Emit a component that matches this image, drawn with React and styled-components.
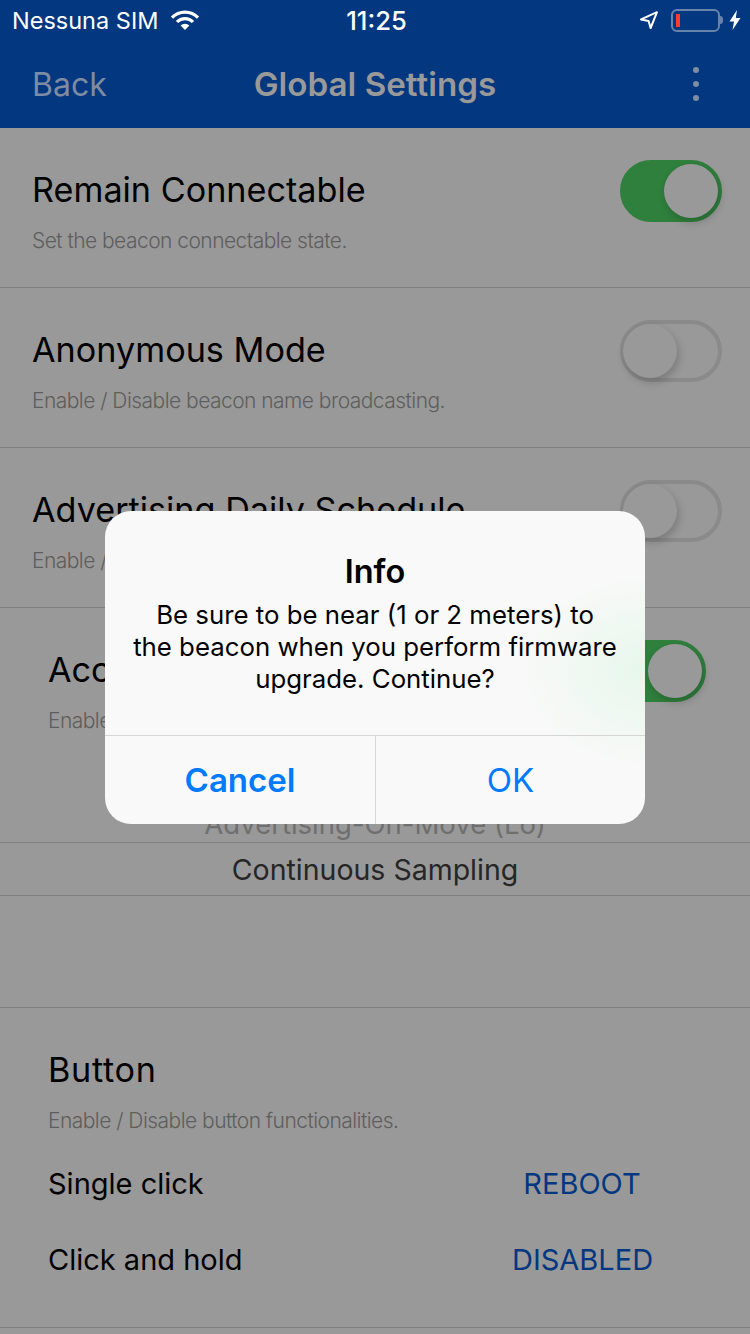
import React from "react";
import styled, { createGlobalStyle } from "styled-components";

const GlobalStyle = createGlobalStyle`
  html, body {
    margin: 0;
    padding: 0;
    background: #999999;
  }
  body {
    font-family: Inter, "Liberation Sans", sans-serif;
  }
`;

function Toggle({ on }) {
  return (
    <ToggleTrack $on={on}>
      <ToggleKnob $on={on} />
    </ToggleTrack>
  );
}

export default function App() {
  return (
    <Page>
      <GlobalStyle />
      <Header>
        <StatusBar>
          <StatusLeft>
            <Carrier>Nessuna SIM</Carrier>
            <svg width="30" height="22" viewBox="0 0 30 22">
              <g fill="none" stroke="#fff" strokeWidth="3.2">
                <path d="M2 8.6 A18 18 0 0 1 28 8.6" />
                <path d="M7 13 A11 11 0 0 1 23 13" />
              </g>
              <path d="M15 21 L10.6 16.4 A6.4 6.4 0 0 1 19.4 16.4 Z" fill="#fff" />
            </svg>
          </StatusLeft>
          <Clock>11:25</Clock>
          <StatusRight>
            <svg width="20" height="20" viewBox="0 0 20 20">
              <path d="M2 9.4 L18 2.2 L11.6 18 L9.6 11 Z" fill="none" stroke="#fff" strokeWidth="2" strokeLinejoin="round" />
            </svg>
            <Battery>
              <BatteryLevel />
            </Battery>
            <BatteryNub />
            <svg width="12" height="20" viewBox="0 0 12 20">
              <path d="M8 0 L0.5 11.5 H5 L3.5 20 L11.5 8 H6.8 Z" fill="#fff" />
            </svg>
          </StatusRight>
        </StatusBar>
        <NavBar>
          <BackLink>Back</BackLink>
          <NavTitle>Global Settings</NavTitle>
          <svg width="8" height="38" viewBox="0 0 8 38">
            <g fill="#7d8ba3">
              <circle cx="4" cy="5" r="3" />
              <circle cx="4" cy="19" r="3" />
              <circle cx="4" cy="33" r="3" />
            </g>
          </svg>
        </NavBar>
      </Header>

      <SettingRow>
        <SettingText>
          <SettingTitle>Remain Connectable</SettingTitle>
          <SettingHint>Set the beacon connectable state.</SettingHint>
        </SettingText>
        <Toggle on />
      </SettingRow>
      <SettingRow>
        <SettingText>
          <SettingTitle>Anonymous Mode</SettingTitle>
          <SettingHint>Enable / Disable beacon name broadcasting.</SettingHint>
        </SettingText>
        <Toggle />
      </SettingRow>
      <SettingRow>
        <SettingText>
          <SettingTitle>Advertising Daily Schedule</SettingTitle>
          <SettingHint>Enable / Disable daily schedule.</SettingHint>
        </SettingText>
        <Toggle />
      </SettingRow>

      <PickerSection>
        <SettingRow $inset $bare>
          <SettingText>
            <SettingTitle>Accelerometer</SettingTitle>
            <SettingHint>Enable / Disable accelerometer.</SettingHint>
          </SettingText>
          <Toggle on />
        </SettingRow>
        <Picker>
          <PickerOption>Advertising-On-Move (Lo)</PickerOption>
          <PickerSelected>Continuous Sampling</PickerSelected>
        </Picker>
      </PickerSection>

      <ButtonSection>
        <ButtonTitle>Button</ButtonTitle>
        <SettingHint>Enable / Disable button functionalities.</SettingHint>
        <ActionList>
          <ActionRow>
            <ActionLabel>Single click</ActionLabel>
            <ActionValue>REBOOT</ActionValue>
          </ActionRow>
          <ActionRow>
            <ActionLabel>Click and hold</ActionLabel>
            <ActionValue>DISABLED</ActionValue>
          </ActionRow>
        </ActionList>
      </ButtonSection>

      <Overlay>
        <Dialog>
          <DialogBody>
            <DialogTitle>Info</DialogTitle>
            <DialogMessage>
              Be sure to be near (1 or 2 meters) to
              <br />
              the beacon when you perform firmware upgrade. Continue?
            </DialogMessage>
          </DialogBody>
          <DialogActions>
            <DialogButton $bold>Cancel</DialogButton>
            <DialogButton>OK</DialogButton>
          </DialogActions>
        </Dialog>
      </Overlay>
    </Page>
  );
}

const Page = styled.div`
  position: relative;
  width: 750px;
  height: 1334px;
  overflow: hidden;
  background: #999999;
`;

const Header = styled.header`
  height: 128px;
  background: #03377f;
`;

const StatusBar = styled.div`
  height: 40px;
  display: grid;
  grid-template-columns: 1fr auto 1fr;
  align-items: center;
  padding: 0 9px 0 12px;
  color: #fff;
`;

const StatusLeft = styled.div`
  display: flex;
  align-items: center;
  gap: 12px;
`;

const Carrier = styled.span`
  font-size: 23.5px;
`;

const Clock = styled.span`
  font-size: 25.6px;
  font-weight: 500;
`;

const StatusRight = styled.div`
  display: flex;
  align-items: center;
  justify-content: flex-end;
`;

const Battery = styled.div`
  box-sizing: border-box;
  width: 49px;
  height: 23px;
  margin-left: 12px;
  padding: 3px;
  border: 2px solid #6884ab;
  border-radius: 6px;
`;

const BatteryLevel = styled.div`
  width: 4px;
  height: 100%;
  background: #ff3b30;
`;

const BatteryNub = styled.div`
  width: 3px;
  height: 8px;
  margin-right: 6px;
  background: #6884ab;
  border-radius: 0 3px 3px 0;
`;

const NavBar = styled.div`
  height: 88px;
  display: grid;
  grid-template-columns: 1fr auto 1fr;
  align-items: center;
  padding: 0 32px;

  svg {
    justify-self: end;
    margin-right: 18px;
  }
`;

const BackLink = styled.span`
  font-size: 32px;
  color: #7d8ba3;
`;

const NavTitle = styled.span`
  font-size: 33.2px;
  font-weight: 600;
  color: #999999;
`;

const SettingRow = styled.div`
  box-sizing: border-box;
  height: ${(p) => (p.$bare ? "auto" : "160px")};
  display: flex;
  justify-content: space-between;
  align-items: flex-start;
  padding: 32px ${(p) => (p.$inset ? "44px" : "28px")} 0 ${(p) => (p.$inset ? "48px" : "32px")};
  border-bottom: ${(p) => (p.$bare ? "none" : "1px solid #7f7f7f")};
`;

const SettingText = styled.div`
  padding-top: 10px;
`;

const SettingTitle = styled.div`
  font-size: 34.2px;
  line-height: 40px;
  color: #000;
`;

const ButtonTitle = styled(SettingTitle)`
  letter-spacing: 0.7px;
`;

const SettingHint = styled.div`
  margin-top: 16px;
  font-size: 21px;
  font-weight: 300;
  letter-spacing: -0.54px;
  line-height: 30px;
  color: #5e5e5e;
`;

const ToggleTrack = styled.div`
  box-sizing: border-box;
  position: relative;
  width: 102px;
  height: 62px;
  border-radius: 31px;
  background: ${(p) => (p.$on ? "#2f7f3d" : "#999999")};
  border: 4px solid ${(p) => (p.$on ? "#2f7f3d" : "#8a8a8a")};
`;

const ToggleKnob = styled.div`
  position: absolute;
  top: 0;
  left: ${(p) => (p.$on ? "40px" : "-1px")};
  width: 54px;
  height: 54px;
  border-radius: 50%;
  background: #999999;
  box-shadow: 2px 4px 8px rgba(0, 0, 0, 0.2);
`;

const PickerSection = styled.section`
  box-sizing: border-box;
  height: 400px;
  border-bottom: 1px solid #7f7f7f;
`;

const Picker = styled.div`
  margin-top: 53px;
  text-align: center;
`;

const PickerOption = styled.div`
  height: 53px;
  line-height: 70px;
  font-size: 27.5px;
  color: #6f6f6f;
`;

const PickerSelected = styled.div`
  box-sizing: border-box;
  height: 54px;
  line-height: 53px;
  font-size: 28.5px;
  color: #262626;
  border-top: 1px solid #7f7f7f;
  border-bottom: 1px solid #7f7f7f;
`;

const ButtonSection = styled.section`
  box-sizing: border-box;
  height: 320px;
  padding: 42px 48px 0;
  border-bottom: 1px solid #7f7f7f;
`;

const ActionList = styled.div`
  margin-top: 9px;
`;

const ActionRow = styled.div`
  display: flex;
  justify-content: space-between;
  align-items: center;
  height: 76px;
`;

const ActionLabel = styled.span`
  font-size: 29px;
  color: #000;
`;

const ActionValue = styled.span`
  width: 140px;
  margin-right: 50px;
  text-align: center;
  white-space: nowrap;
  font-size: 29px;
  color: #03377f;
`;

const Overlay = styled.div`
  position: absolute;
  inset: 0;
  display: flex;
  align-items: center;
  justify-content: center;
`;

const Dialog = styled.div`
  width: 540px;
  height: 313px;
  display: flex;
  flex-direction: column;
  border-radius: 26px;
  overflow: hidden;
  background:
    radial-gradient(ellipse 130px 100px at 100% 51%, rgba(230, 247, 234, 0.95), rgba(249, 249, 249, 0)),
    #f9f9f9;
`;

const DialogBody = styled.div`
  flex: 1;
  padding: 41px 24px 0;
  text-align: center;
`;

const DialogTitle = styled.div`
  font-size: 32.5px;
  font-weight: 600;
  line-height: 40px;
  color: #000;
`;

const DialogMessage = styled.div`
  margin-top: 7px;
  font-size: 25.8px;
  line-height: 32px;
  color: #000;
`;

const DialogActions = styled.div`
  height: 88px;
  display: grid;
  grid-template-columns: 1fr 1fr;
  border-top: 1px solid #d6d6d6;
`;

const DialogButton = styled.div`
  display: flex;
  align-items: center;
  justify-content: center;
  font-size: 33px;
  font-weight: ${(p) => (p.$bold ? 600 : 400)};
  color: #007aff;

  & + & {
    border-left: 1px solid #d6d6d6;
  }
`;
